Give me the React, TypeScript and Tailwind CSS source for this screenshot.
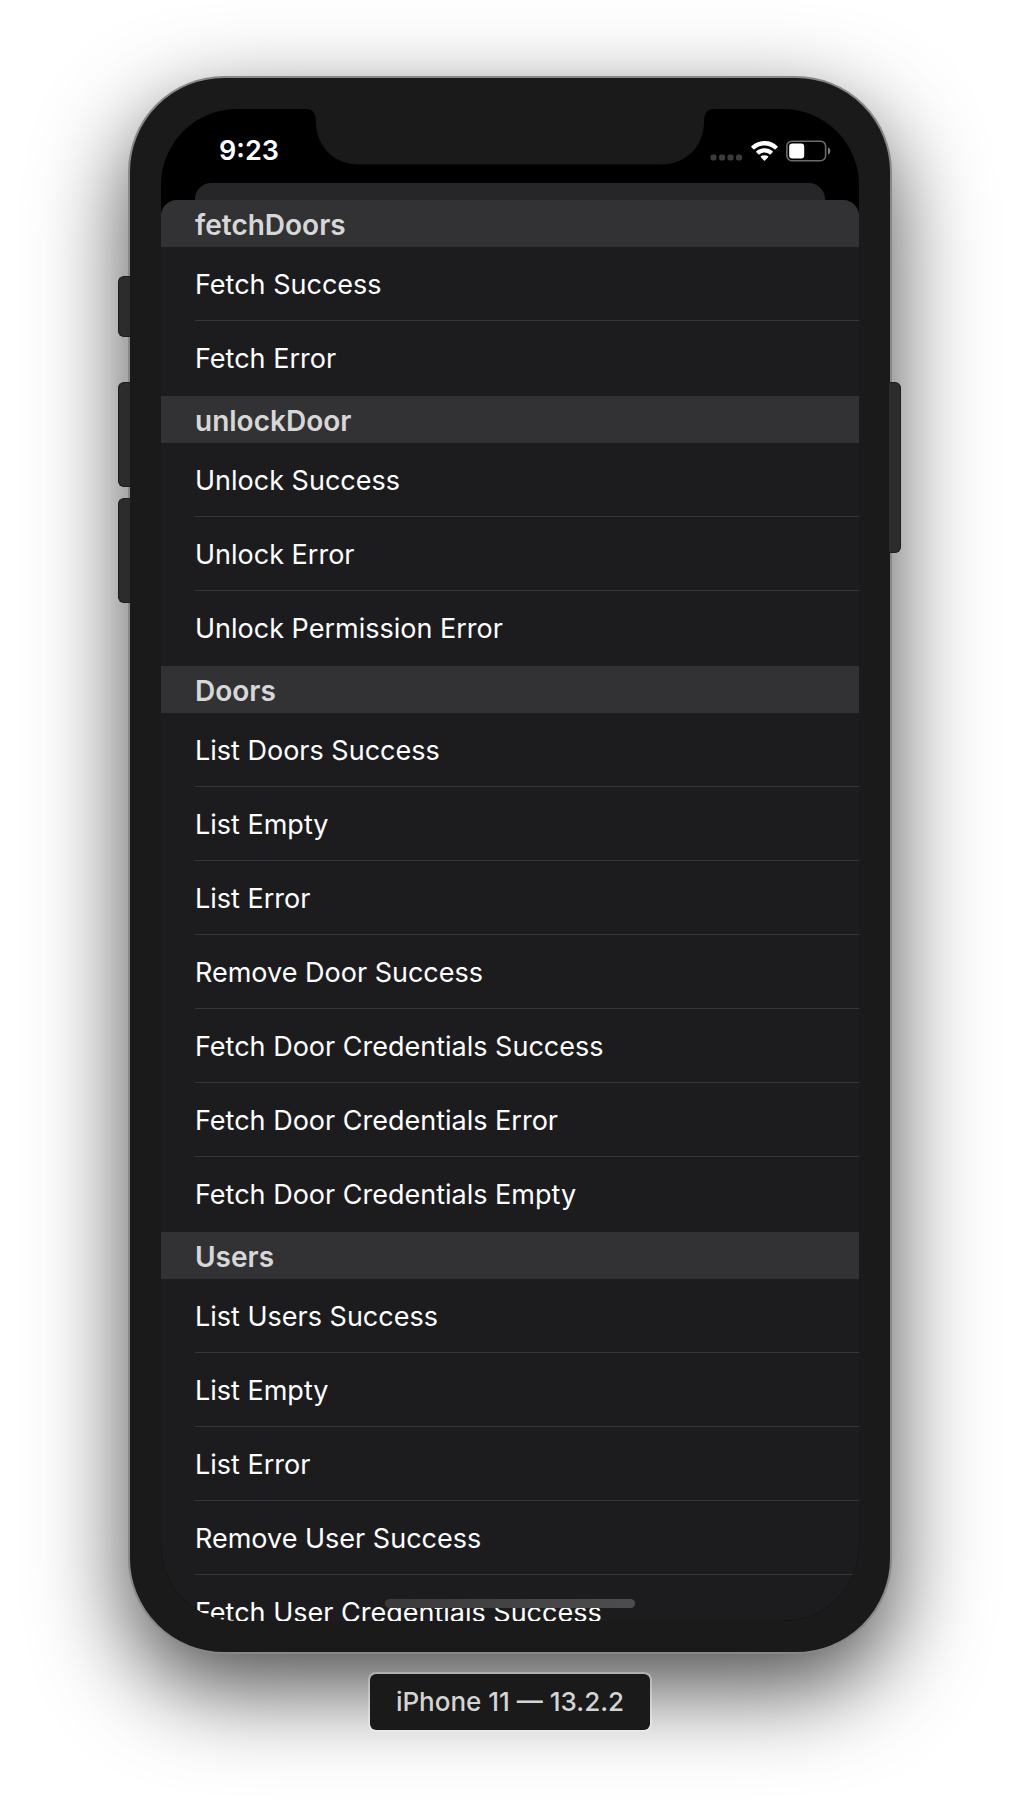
const sections = [
  { title: 'fetchDoors', items: ['Fetch Success', 'Fetch Error'] },
  { title: 'unlockDoor', items: ['Unlock Success', 'Unlock Error', 'Unlock Permission Error'] },
  {
    title: 'Doors',
    items: [
      'List Doors Success',
      'List Empty',
      'List Error',
      'Remove Door Success',
      'Fetch Door Credentials Success',
      'Fetch Door Credentials Error',
      'Fetch Door Credentials Empty',
    ],
  },
  {
    title: 'Users',
    items: ['List Users Success', 'List Empty', 'List Error', 'Remove User Success', 'Fetch User Credentials Success'],
  },
];

function Notch() {
  return (
    <svg
      className="absolute inset-x-0 top-0 mx-auto"
      width="410"
      height="56"
      viewBox="0 0 410 56"
      aria-hidden="true"
    >
      <path
        d="M0 -1V0H1C8 0 11 4 11 13C11 38 30 55.5 54 55.5H356C380 55.5 399 38 399 13C399 4 402 0 409 0H410V-1Z"
        fill="#1a1a1a"
      />
    </svg>
  );
}

function StatusBar() {
  return (
    <header className="flex h-[74px] items-center justify-between pt-[10px] pr-7 pl-[58px]">
      <time className="text-[27px] leading-8 font-semibold">9:23</time>
      <div className="flex items-center gap-2">
        <svg width="33" height="22" viewBox="0 0 33 22" aria-label="No signal">
          <g fill="#3b3b3b">
            <rect x="0.5" y="14.5" width="6" height="6" rx="2" />
            <rect x="9" y="14.5" width="6" height="6" rx="2" />
            <rect x="17.5" y="14.5" width="6" height="6" rx="2" />
            <rect x="26" y="14.5" width="6" height="6" rx="2" />
          </g>
        </svg>
        <svg width="27" height="22" viewBox="0 0 27 22" fill="#fff" aria-label="Wi-Fi">
          <path d="M13.5 1C8.4 1 3.9 2.9 0.4 6.2C0.1 6.5 0.1 6.9 0.4 7.2L2.5 9.3C2.8 9.6 3.2 9.6 3.5 9.3C6.2 6.8 9.7 5.4 13.5 5.4C17.3 5.4 20.8 6.8 23.5 9.3C23.8 9.6 24.2 9.6 24.5 9.3L26.6 7.2C26.9 6.9 26.9 6.5 26.6 6.2C23.1 2.9 18.6 1 13.5 1Z" />
          <path d="M13.5 8.2C10.4 8.2 7.5 9.4 5.3 11.3C5 11.6 5 12 5.3 12.3L7.4 14.3C7.7 14.6 8.1 14.6 8.4 14.4C9.8 13.2 11.6 12.5 13.5 12.5C15.4 12.5 17.2 13.2 18.6 14.4C18.9 14.6 19.3 14.6 19.6 14.3L21.7 12.3C22 12 22 11.6 21.7 11.3C19.5 9.4 16.6 8.2 13.5 8.2Z" />
          <path d="M13.5 15.2C12.1 15.2 10.9 15.6 9.9 16.3C9.6 16.6 9.6 17 9.9 17.3L13 20.4C13.3 20.7 13.7 20.7 14 20.4L17.1 17.3C17.4 17 17.4 16.6 17.1 16.3C16.1 15.6 14.9 15.2 13.5 15.2Z" />
        </svg>
        <svg width="45" height="22" viewBox="0 0 45 22" aria-label="Battery">
          <rect x="0.9" y="1.2" width="38.7" height="19.5" rx="5" fill="none" stroke="#6b6b6b" strokeWidth="1.6" />
          <rect x="3.2" y="3.5" width="15" height="15" rx="3" fill="#fff" />
          <path d="M42 7.5C43.4 8 44.3 9.3 44.3 11C44.3 12.7 43.4 14 42 14.5Z" fill="#7d7d7d" />
        </svg>
      </div>
    </header>
  );
}

function ScenarioList() {
  return (
    <main className="overflow-hidden rounded-t-2xl bg-[#1c1c1e]">
      {sections.map((section) => (
        <section key={section.title} className="pb-px">
          <h2 className="flex h-[47px] items-center bg-[#323234] px-[34px] pt-0.5 text-[28px] leading-8 font-semibold text-[#d7d7d8]">
            {section.title}
          </h2>
          <ul className="pl-[34px]">
            {section.items.map((item) => (
              <li key={item} className="border-b border-[#363638] last:border-transparent">
                <button type="button" className="flex h-[73px] w-full items-center pt-[3px] text-left text-[27px] leading-8">
                  {item}
                </button>
              </li>
            ))}
          </ul>
        </section>
      ))}
    </main>
  );
}

export default function App() {
  return (
    <div className="min-h-screen overflow-hidden bg-white pt-[76px] pb-[70px] font-['Inter',sans-serif]">
      <div className="relative mx-auto w-full max-w-[764px]">
        <div className="rounded-[96px] border-2 border-[#888888] bg-[#1a1a1a] p-[31px] shadow-[0_34px_92px_rgba(0,0,0,0.7)]">
          <div className="relative aspect-[698/1512] overflow-hidden rounded-[76px] bg-black text-white">
            <StatusBar />
            <div className="mx-[34px] h-[17px] rounded-t-2xl bg-[#262628]" />
            <ScenarioList />
            <Notch />
            <div className="absolute inset-x-0 bottom-[13px] mx-auto h-[9px] w-[250px] rounded-full bg-linear-to-r from-[#3a3a3a] to-[#4d4d4d]" />
          </div>
        </div>
        <div className="absolute top-[200px] right-full -mr-0.5 flex w-3 flex-col">
          <div className="h-[61px] rounded-l-md border border-r-0 border-[#1c1c1c] bg-[#2c2c2c]" />
          <div className="mt-[45px] h-[105px] rounded-l-md border border-r-0 border-[#1c1c1c] bg-[#2c2c2c]" />
          <div className="mt-[11px] h-[105px] rounded-l-md border border-r-0 border-[#1c1c1c] bg-[#2c2c2c]" />
        </div>
        <div className="absolute top-[306px] left-full -ml-[3px] h-[171px] w-3 rounded-r-md border border-l-0 border-[#1c1c1c] bg-[#2c2c2c]" />
      </div>
      <div className="relative mx-auto mt-[18px] flex h-[60px] w-fit items-center rounded-lg border-2 border-white/30 bg-[#1a1a1a] bg-clip-padding px-[26px] text-[26px] leading-8 font-medium text-[#d4d4d4]">
        iPhone 11 — 13.2.2
      </div>
    </div>
  );
}
